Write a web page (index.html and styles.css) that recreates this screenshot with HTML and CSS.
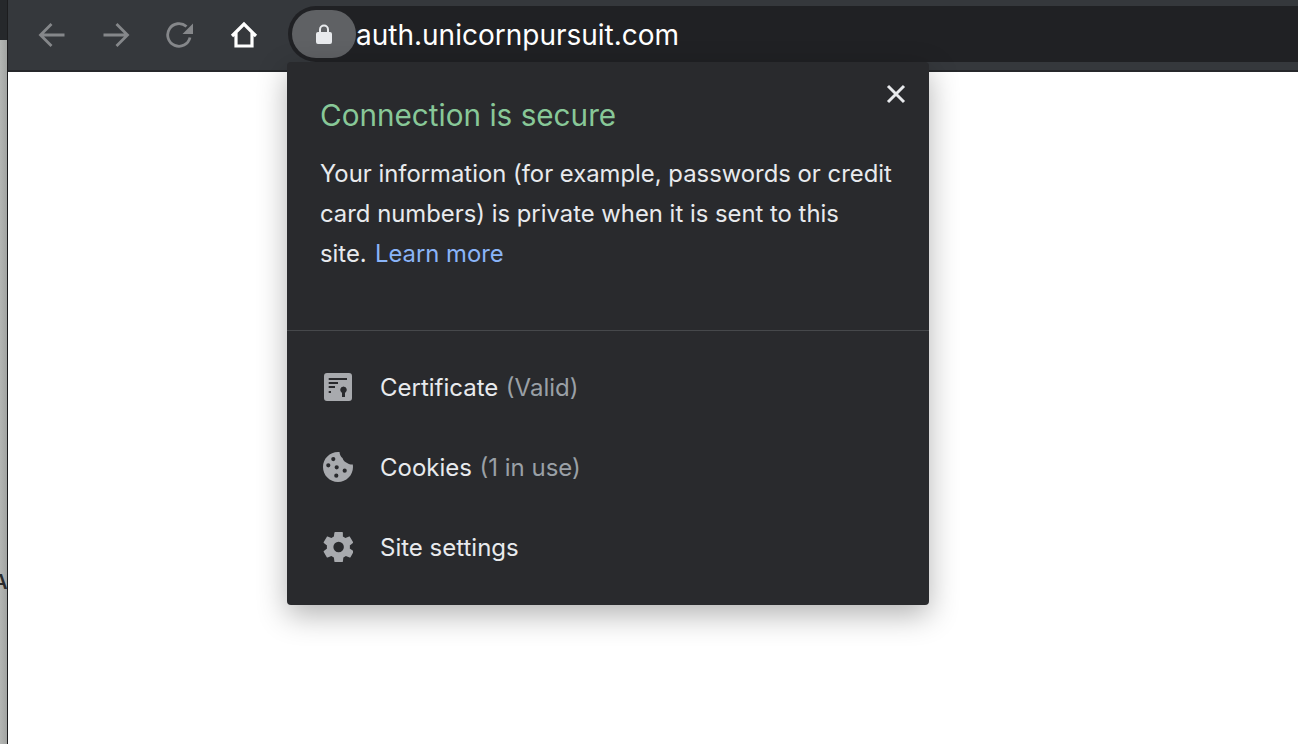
FILE: index.html
```html
<!DOCTYPE html>
<html lang="en">
<head>
<meta charset="utf-8">
<title>Connection is secure</title>
<link rel="stylesheet" href="styles.css">
</head>
<body>
<div class="screen">
  <aside class="edge">
    <div class="edge-top"></div>
    <div class="edge-rest"><span class="edge-letter">A</span></div>
  </aside>
  <main class="window">
    <header class="toolbar">
      <nav class="nav">
        <svg class="nav-icon" viewBox="0 0 28 28"><path class="dim" d="M26.500 14H2.500M13.500 3 2.500 14l11 11"/></svg>
        <svg class="nav-icon" viewBox="0 0 28 28"><path class="dim" d="M1.500 14h24M14.500 3l11 11-11 11"/></svg>
        <svg class="nav-icon" viewBox="0 0 28 28"><path class="dim" d="M24 16.500A11.300 11.300 0 1 1 20.500 5.500"/><path class="dim-fill" d="M27 2.500v10.500H16.500z"/></svg>
        <svg class="nav-icon" viewBox="0 0 28 28"><path class="bright" d="M2 15 14 3l12 12M6 12v13h16V12"/></svg>
      </nav>
      <div class="omnibox">
        <div class="lock-chip">
          <svg class="lock" viewBox="0 0 16 20"><path d="M3 8V5.500a5 5 0 0 1 10 0V8h1a2 2 0 0 1 2 2v8a2 2 0 0 1-2 2H2a2 2 0 0 1-2-2v-8a2 2 0 0 1 2-2zm2 0h6V5.500a3 3 0 0 0-6 0z"/></svg>
        </div>
        <span class="url">auth.unicornpursuit.com</span>
      </div>
    </header>
    <div class="page"></div>
  </main>
</div>

<section class="popup">
  <svg class="close" viewBox="0 0 20 20"><path d="M2 2l16 16M18 2 2 18"/></svg>
  <div class="summary">
    <h1 class="title">Connection is secure</h1>
    <p class="desc">Your information (for example, passwords or credit card numbers) is private when it is sent to this<br>site. <a class="link">Learn more</a></p>
  </div>
  <ul class="menu">
    <li class="row">
      <svg class="row-icon" viewBox="0 0 30 30"><path fill-rule="evenodd" d="M4 1h22a3 3 0 0 1 3 3v22a3 3 0 0 1-3 3H4a3 3 0 0 1-3-3V4a3 3 0 0 1 3-3zm1.700 5v2h18.300V6zm0 4v2h9.300v-2zm0 4v2h6.300v-2zm0 5v2h2.300v-2zm14.800-4.500a3.400 3.400 0 0 0-1.500 6.400V25h3v-4.100a3.400 3.400 0 0 0-1.500-6.400z"/></svg>
      <span class="row-label">Certificate</span><span class="row-note">(Valid)</span>
    </li>
    <li class="row">
      <svg class="row-icon" viewBox="0 0 30 30"><path fill-rule="evenodd" d="M15 0c.5 0 1 0 1.500.1.300 2.700 1.200 4.800 3 6 .8 2.700 3 4.700 5.500 5.300 1.300.9 3 1.400 4.800 1.100.1.800.2 1.600.2 2.500 0 8.300-6.700 15-15 15S0 23.300 0 15 6.700 0 15 0zM10.300 5a2.100 2.100 0 1 0 0 4.200 2.100 2.100 0 0 0 0-4.200zM5.300 11.200a2.100 2.100 0 1 0 0 4.200 2.100 2.100 0 0 0 0-4.200zM13.700 13.200a2.100 2.100 0 1 0 0 4.200 2.100 2.100 0 0 0 0-4.200zM21.700 16.600a2.100 2.100 0 1 0 0 4.200 2.100 2.100 0 0 0 0-4.200zM13.300 21.600a2.100 2.100 0 1 0 0 4.200 2.100 2.100 0 0 0 0-4.200z"/></svg>
      <span class="row-label">Cookies</span><span class="row-note">(1 in use)</span>
    </li>
    <li class="row">
      <svg class="row-icon" viewBox="0 0 24 24"><path fill-rule="evenodd" d="M21.400 13.200c.1-.4.100-.8.100-1.200s0-.8-.1-1.200l2.500-2c.2-.2.300-.5.100-.8l-2.400-4.100c-.1-.3-.4-.4-.7-.3l-3 1.200c-.6-.5-1.300-.9-2-1.200L15.900.4c0-.2-.3-.4-.6-.4H9.700c-.3 0-.5.200-.6.500l-.4 3.100c-.7.300-1.400.7-2 1.200l-3-1.200c-.3-.1-.6 0-.7.300L.6 8c-.2.300-.1.600.1.800l2.500 2c-.1.400-.1.800-.1 1.200s0 .8.100 1.200l-2.500 2c-.2.200-.3.500-.1.800l2.400 4.100c.1.300.4.400.7.300l3-1.200c.6.500 1.300.9 2 1.200l.4 3.100c.1.300.3.500.6.500h5.600c.3 0 .6-.2.600-.5l.4-3.100c.7-.3 1.400-.7 2-1.200l3 1.200c.3.100.6 0 .7-.3l2.400-4.100c.2-.3.100-.6-.1-.8zM12.500 16.200a4.200 4.200 0 1 1 0-8.400 4.200 4.200 0 0 1 0 8.400z"/></svg>
      <span class="row-label">Site settings</span>
    </li>
  </ul>
</section>
</body>
</html>
```
FILE: styles.css
```css
* { box-sizing: border-box; }
html, body { margin: 0; height: 100%; overflow: hidden; background: #fff; }
body { font-family: Inter, Roboto, "Liberation Sans", sans-serif; }

.screen { display: flex; height: 744px; width: 1298px; }

.edge { width: 8px; display: flex; flex-direction: column; border-right: 1px solid #1c1c1e; }
.edge-top { height: 40px; background: #26282b; }
.edge-rest { flex: 1; background: linear-gradient(90deg, #b4b6b4, #a2a4a2); position: relative; overflow: hidden; }
.edge-letter { position: absolute; left: -7px; top: 530px; font-size: 20px; font-weight: 600; color: #2a2a2c; line-height: 24px; }

.window { flex: 1; display: flex; flex-direction: column; }
.toolbar {
  height: 72px;
  background: #35383c;
  border-bottom: 2px solid #26282b;
  display: flex;
  align-items: flex-start;
  padding-top: 6px;
}
.nav { display: flex; align-items: center; gap: 36px; height: 57px; padding-left: 30px; width: 280px; }
.nav-icon { width: 28px; height: 28px; flex: none; fill: none; stroke-width: 2.800; }
.dim { stroke: #85878a; }
.dim-fill { fill: #85878a; stroke: none; }
.bright { stroke: #fff; stroke-width: 3.200; }

.omnibox {
  flex: 1;
  height: 56px;
  background: #202124;
  border-radius: 28px 0 0 28px;
  display: flex;
  align-items: center;
  padding-left: 4px;
}
.lock-chip {
  width: 64px;
  height: 48px;
  border-radius: 24px;
  background: #5f6164;
  display: flex;
  align-items: center;
  justify-content: center;
  flex: none;
}
.lock { width: 16px; height: 20px; fill: #e8eaed; }
.url { color: #fff; font-size: 28px; line-height: 34px; margin-top: 1px; }

.page { flex: 1; background: #fff; }

.popup {
  position: absolute;
  left: 287px;
  top: 62px;
  width: 642px;
  height: 543px;
  background: #292a2d;
  border-radius: 4px;
  box-shadow: 0 10px 30px rgba(0, 0, 0, .3);
  color: #e8eaed;
}
.close { position: absolute; right: 23px; top: 22px; width: 20px; height: 20px; fill: none; stroke: #e8eaed; stroke-width: 3; }
.summary { height: 269px; padding: 35px 33px 0; border-bottom: 1px solid #46484b; }
.title { margin: 0 0 21px; color: #88c898; font-size: 29.700px; font-weight: 400; line-height: 36px; }
.desc { margin: 0; font-size: 23.850px; line-height: 40px; }
.link { color: #8ab4f8; margin-left: 1.500px; }
.menu { list-style: none; margin: 0; padding: 16px 0 0; }
.row { height: 80px; display: flex; align-items: center; padding-left: 36px; font-size: 24px; }
.row-icon { width: 30px; height: 30px; fill: #a8aaae; margin-right: 27px; flex: none; }
.row-note { color: #9aa0a6; margin-left: 7.500px; }
```
